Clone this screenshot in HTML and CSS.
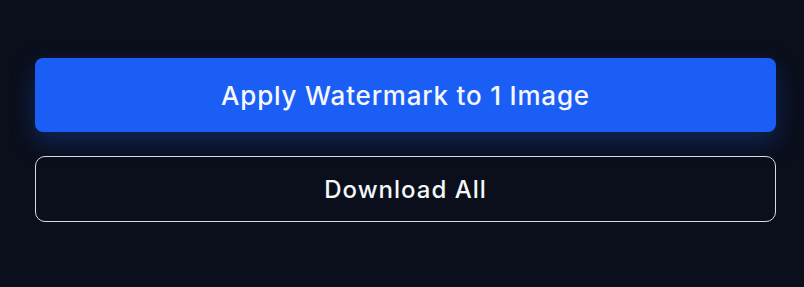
FILE: index.html
```html
<!DOCTYPE html>
<html>
<head>
<meta charset="utf-8">
<link rel="stylesheet" href="styles.css">
</head>
<body>
<div class="actions">
  <button class="btn btn-primary">Apply Watermark to 1 Image</button>
  <button class="btn btn-outline">Download All</button>
</div>
</body>
</html>
```
FILE: styles.css
```css
html, body {
  margin: 0;
  padding: 0;
  background: #0b0f1c;
  height: 100%;
}
.actions {
  display: flex;
  flex-direction: column;
  gap: 24px;
  padding: 58px 28px 0 35px;
}
.btn {
  font-family: Inter, "Noto Sans", sans-serif;
  font-weight: 500;
  color: #f5f7fb;
  width: 100%;
  cursor: pointer;
}
.btn-primary {
  height: 74px;
  font-size: 26px;
  letter-spacing: 0.8px;
  background: #1b5ef5;
  border: none;
  border-radius: 8px;
  box-shadow: 0 10px 24px rgba(27, 94, 245, 0.28);
}
.btn-outline {
  height: 66px;
  font-size: 24px;
  letter-spacing: 1px;
  background: transparent;
  border: 1px solid #d8dbe3;
  border-radius: 10px;
}
```
